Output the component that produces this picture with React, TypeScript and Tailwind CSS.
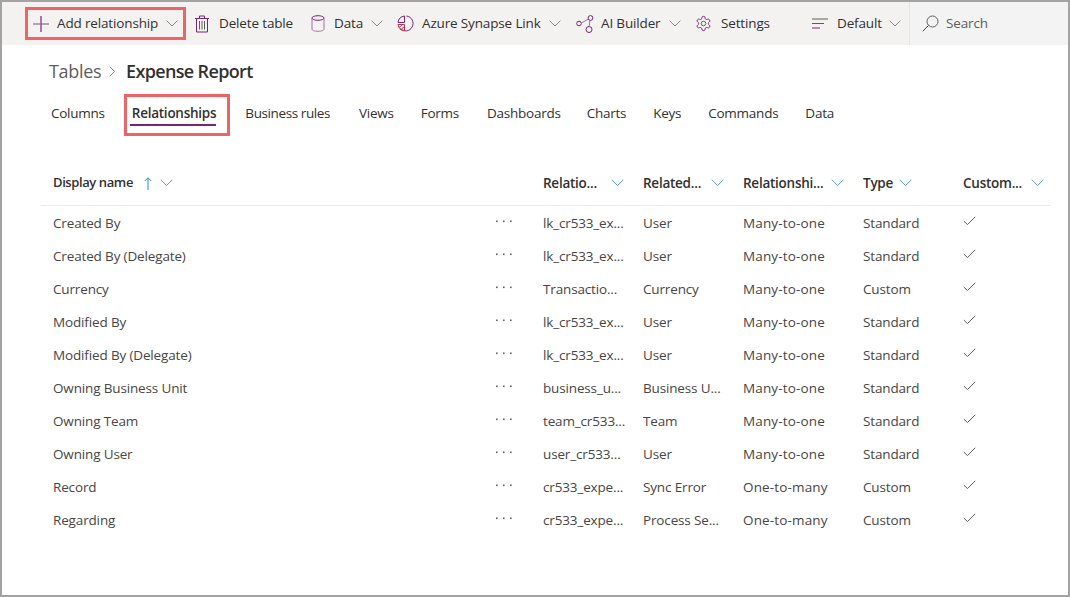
import React from "react";

const rows = [
  ["Created By", "lk_cr533_ex...", "User", "Many-to-one", "Standard"],
  ["Created By (Delegate)", "lk_cr533_ex...", "User", "Many-to-one", "Standard"],
  ["Currency", "Transactio...", "Currency", "Many-to-one", "Custom"],
  ["Modified By", "lk_cr533_ex...", "User", "Many-to-one", "Standard"],
  ["Modified By (Delegate)", "lk_cr533_ex...", "User", "Many-to-one", "Standard"],
  ["Owning Business Unit", "business_u...", "Business U...", "Many-to-one", "Standard"],
  ["Owning Team", "team_cr533...", "Team", "Many-to-one", "Standard"],
  ["Owning User", "user_cr533...", "User", "Many-to-one", "Standard"],
  ["Record", "cr533_expe...", "Sync Error", "One-to-many", "Custom"],
  ["Regarding", "cr533_expe...", "Process Se...", "One-to-many", "Custom"],
];

const tabs = [
  { label: "Columns", cls: "mr-[27px]" },
  { label: "Relationships", cls: "relative mr-[29px] font-semibold" },
  { label: "Business rules", cls: "mr-[29px] tracking-[-0.4px]" },
  { label: "Views", cls: "mr-[27px]" },
  { label: "Forms", cls: "mr-[28px]" },
  { label: "Dashboards", cls: "mr-[26px]" },
  { label: "Charts", cls: "mr-[27px]" },
  { label: "Keys", cls: "mr-[27px]" },
  { label: "Commands", cls: "mr-[27px]" },
  { label: "Data", cls: "" },
];

const Chevron = ({ className = "" }: { className?: string }) => (
  <svg width="12" height="7" viewBox="0 0 12 7" fill="none" stroke="#8a8886" strokeWidth="1" className={className}>
    <path d="M0.6 0.7 L6 6 L11.4 0.7" />
  </svg>
);

const HeadChevron = () => (
  <svg width="13" height="8" viewBox="0 0 13 8" fill="none" stroke="#5f9ccb" strokeWidth="1">
    <path d="M0.7 0.8 L6.5 6.6 L12.3 0.8" />
  </svg>
);

const Check = () => (
  <svg width="13" height="10" viewBox="0 0 13 10" fill="none" stroke="#605e5c" strokeWidth="1">
    <path d="M0.8 5 L4.5 8.6 L12.2 0.8" />
  </svg>
);

const Dots = () => (
  <svg width="17" height="3" viewBox="0 0 17 3" fill="#605e5c">
    <rect x="0" y="0.5" width="1.6" height="1.6" />
    <rect x="7" y="0.5" width="1.6" height="1.6" />
    <rect x="14" y="0.5" width="1.6" height="1.6" />
  </svg>
);

export default function App() {
  return (
    <div className="w-[1070px] h-[597px] border-2 border-[#a3a3a3] bg-white overflow-hidden font-['Open_Sans',sans-serif] text-[13.5px] tracking-[-0.15px] text-[#323130]">
      {/* command bar */}
      <div className="h-[43px] bg-[#f3f2f1] flex items-center">
        <div className="ml-[23px] w-[161px] h-[33px] border-[3px] border-[#ee6464] flex items-center pl-[5px]">
          <svg width="16" height="16" viewBox="0 0 16 16" fill="none" strokeWidth="1.2">
            <path d="M8 0 V16" stroke="#742774" />
            <path d="M0 8 H16" stroke="#8f6a8f" />
          </svg>
          <span className="ml-[8px] w-[101px] whitespace-nowrap">Add relationship</span>
          <Chevron className="ml-[8px]" />
        </div>
        <svg width="16" height="18" viewBox="0 0 16 18" fill="none" stroke="#742774" strokeWidth="1" className="ml-[8px]">
          <path d="M1 3.5 H15 M5.5 3.5 V1 H10.5 V3.5 M2.5 3.5 V17 H13.5 V3.5" />
          <path d="M5.5 6 V14.5 M8 6 V14.5 M10.5 6 V14.5" stroke="#605e5c" />
        </svg>
        <span className="ml-[9px] w-[75px] whitespace-nowrap">Delete table</span>
        <svg width="14" height="17" viewBox="0 0 14 17" fill="none" strokeWidth="1" className="ml-[17px]">
          <ellipse cx="7" cy="3" rx="6" ry="2.3" stroke="#742774" />
          <path d="M1 3 V14 C1 15.4 3.5 16.3 7 16.3 C10.5 16.3 13 15.4 13 14 V3" stroke="#a66fa6" />
        </svg>
        <span className="ml-[9px] w-[28px] whitespace-nowrap">Data</span>
        <Chevron className="ml-[9px]" />
        <svg width="17" height="17" viewBox="0 0 17 17" fill="none" stroke="#742774" strokeWidth="1" className="ml-[14px]">
          <path d="M9.5 1 A7.5 7.5 0 1 1 3 13.5" />
          <path d="M7.5 1 A7 7 0 0 0 1 7.5 H7.5 Z" />
          <path d="M1 9.5 H7.5 V15.5 A7 7 0 0 1 1 9.5 Z M2 12.5 L5.5 9.5 M4 14.5 L7.5 11.5" stroke="#c4314b" />
        </svg>
        <span className="ml-[8px] w-[118px] whitespace-nowrap">Azure Synapse Link</span>
        <Chevron className="ml-[9px]" />
        <svg width="18" height="18" viewBox="0 0 18 18" fill="none" stroke="#742774" strokeWidth="1" className="ml-[15px]">
          <circle cx="3" cy="8.5" r="2.3" />
          <circle cx="14.5" cy="3" r="2.4" />
          <circle cx="13" cy="14.5" r="3" />
          <path d="M5.3 8 L12.5 4 M13.8 5.4 L13.3 11.5" stroke="#a66fa6" />
        </svg>
        <span className="ml-[7px] w-[59px] whitespace-nowrap">AI Builder</span>
        <Chevron className="ml-[9px]" />
        <svg width="17" height="17" viewBox="0 0 24 24" fill="none" stroke="#742774" strokeWidth="1.4" className="ml-[14px]">
          <path d="M12.22 2h-.44a2 2 0 0 0-2 2v.18a2 2 0 0 1-1 1.73l-.43.25a2 2 0 0 1-2 0l-.15-.08a2 2 0 0 0-2.73.73l-.22.38a2 2 0 0 0 .73 2.73l.15.1a2 2 0 0 1 1 1.72v.51a2 2 0 0 1-1 1.74l-.15.09a2 2 0 0 0-.73 2.73l.22.38a2 2 0 0 0 2.73.73l.15-.08a2 2 0 0 1 2 0l.43.25a2 2 0 0 1 1 1.73V20a2 2 0 0 0 2 2h.44a2 2 0 0 0 2-2v-.18a2 2 0 0 1 1-1.73l.43-.25a2 2 0 0 1 2 0l.15.08a2 2 0 0 0 2.73-.73l.22-.39a2 2 0 0 0-.73-2.73l-.15-.08a2 2 0 0 1-1-1.74v-.5a2 2 0 0 1 1-1.74l.15-.09a2 2 0 0 0 .73-2.73l-.22-.38a2 2 0 0 0-2.73-.73l-.15.08a2 2 0 0 1-2 0l-.43-.25a2 2 0 0 1-1-1.73V4a2 2 0 0 0-2-2z" />
          <circle cx="12" cy="12" r="3.2" stroke="#605e5c" />
        </svg>
        <span className="ml-[9px] w-[50px] whitespace-nowrap">Settings</span>
        <svg width="16" height="11" viewBox="0 0 16 11" fill="none" strokeWidth="1" className="ml-[41px]">
          <path d="M0 1 H16" stroke="#605e5c" />
          <path d="M0 5.5 H12" stroke="#605e5c" />
          <path d="M0 10 H8" stroke="#742774" />
        </svg>
        <span className="ml-[9px] w-[44px] whitespace-nowrap">Default</span>
        <Chevron className="ml-[8px]" />
        <div className="ml-[8px] flex-1 h-full bg-[#f3f3f3] border-l border-[#e6e6e6] flex items-center pl-[12px]">
          <svg width="17" height="17" viewBox="0 0 17 17" fill="none" strokeWidth="1">
            <circle cx="10.5" cy="6.5" r="5.5" stroke="#605e5c" />
            <path d="M6.5 10.5 L0.8 16.2" stroke="#742774" />
          </svg>
          <span className="ml-[7px] text-[#605e5c] whitespace-nowrap">Search</span>
        </div>
      </div>

      {/* breadcrumb */}
      <div className="h-[52px] pl-[47px] flex items-center">
        <span className="text-[18px] text-[#605e5c] tracking-[-0.3px] w-[50px]">Tables</span>
        <svg width="7" height="11" viewBox="0 0 7 11" fill="none" stroke="#8a8886" strokeWidth="1" className="ml-[10px]">
          <path d="M0.7 0.7 L5.7 5.5 L0.7 10.3" />
        </svg>
        <span className="ml-[10px] text-[18px] font-semibold tracking-[-0.65px]">Expense Report</span>
      </div>

      {/* tabs */}
      <div className="flex h-[32px] pl-[49px] items-center tracking-[-0.25px]">
        {tabs.map((t, i) => (
          <div key={t.label} className={t.cls}>
            {i === 1 && (
              <>
                <div className="absolute -left-[8px] -right-[14px] -top-[9px] -bottom-[13px] border-[3px] border-[#ee6464]" />
                <div className="absolute -left-[2px] right-0 bottom-[-3px] h-[2px] bg-[#742774]" />
              </>
            )}
            <span className="whitespace-nowrap">{t.label}</span>
          </div>
        ))}
      </div>

      {/* table */}
      <div className="mt-[32px] ml-[39px] w-[1010px]">
        <div className="h-[45px] border-b border-[#edebe9] flex items-center font-semibold text-[#323130] tracking-[-0.25px]">
          <div className="w-[502px] pl-[12px] flex items-center">
            <span className="w-[79px] whitespace-nowrap text-[13px] tracking-[-0.4px]">Display name</span>
            <svg width="8" height="13" viewBox="0 0 8 13" fill="none" stroke="#2b88d8" strokeWidth="1" className="ml-[12px]">
              <path d="M4 13 V1 M0.8 4 L4 0.8 L7.2 4" />
            </svg>
            <svg width="13" height="8" viewBox="0 0 13 8" fill="none" stroke="#5f9ccb" strokeWidth="1" className="ml-[8px]">
              <path d="M0.7 0.8 L6.5 6.6 L12.3 0.8" />
            </svg>
          </div>
          <div className="w-[100px] flex items-center"><span className="w-[68px]">Relatio...</span><HeadChevron /></div>
          <div className="w-[100px] flex items-center"><span className="w-[68px]">Related...</span><HeadChevron /></div>
          <div className="w-[120px] flex items-center"><span className="w-[88px]">Relationshi...</span><HeadChevron /></div>
          <div className="w-[100px] flex items-center"><span className="w-[36px]">Type</span><HeadChevron /></div>
          <div className="w-[88px] flex items-center"><span className="w-[68px]">Custom...</span><HeadChevron /></div>
        </div>
        <div className="pt-[1px]">
          {rows.map((r) => (
            <div key={r[0]} className="h-[33px] flex items-center text-[#484644]">
              <div className="w-[455px] pl-[12px] whitespace-nowrap">{r[0]}</div>
              <div className="w-[47px] pb-[5px]"><Dots /></div>
              <div className="w-[100px] whitespace-nowrap">{r[1]}</div>
              <div className="w-[100px] whitespace-nowrap">{r[2]}</div>
              <div className="w-[120px] whitespace-nowrap tracking-[0.15px]">{r[3]}</div>
              <div className="w-[100px] whitespace-nowrap">{r[4]}</div>
              <div className="w-[88px] pb-[5px]"><Check /></div>
            </div>
          ))}
        </div>
      </div>
    </div>
  );
}
